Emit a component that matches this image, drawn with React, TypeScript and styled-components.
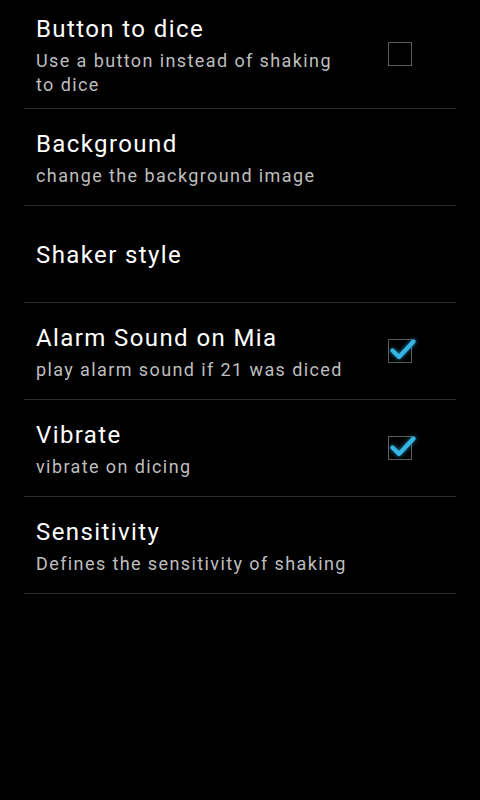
import React from 'react';
import styled, { createGlobalStyle } from 'styled-components';

const GlobalStyle = createGlobalStyle`
  html, body {
    margin: 0;
    padding: 0;
    background: #000;
  }
  body {
    font-family: Roboto, "Noto Sans", sans-serif;
    -webkit-font-smoothing: antialiased;
  }
`;

const Screen = styled.div`
  width: 480px;
  height: 800px;
  background: #000;
  overflow: hidden;
`;

const List = styled.ul`
  list-style: none;
  margin: 0;
  padding: 0 24px;
`;

const Row = styled.li<{ $tall?: boolean }>`
  display: flex;
  align-items: center;
  height: ${props => (props.$tall ? 108 : 96)}px;
  border-bottom: 1px solid #2b2b2b;
  padding: 0 32px 0 12px;
`;

const TextBlock = styled.div`
  width: 312px;
  padding-top: 2px;
  display: flex;
  flex-direction: column;
`;

const Title = styled.div`
  color: #fff;
  font-size: 24px;
  line-height: 30px;
  letter-spacing: 1.4px;
`;

const Summary = styled.div`
  color: #bebebe;
  font-size: 18px;
  line-height: 24px;
  letter-spacing: 1.4px;
  margin-top: 5px;
`;

const Widget = styled.div`
  margin-left: auto;
  width: 48px;
  display: flex;
  justify-content: center;
`;

const Box = styled.div`
  position: relative;
  width: 24px;
  height: 24px;
  box-sizing: border-box;
  border: 1.5px solid #5c5c5c;

  svg {
    position: absolute;
    left: 0px;
    top: -6px;
    overflow: visible;
    filter: drop-shadow(0 0 2px rgba(51, 181, 229, 0.75));
  }
`;

const CheckBox: React.FC<{ checked?: boolean }> = ({ checked }) => (
  <Box>
    {checked && (
      <svg width="28" height="28" viewBox="0 0 28 28">
        <path
          d="M3.5 16.5 L10 23 L24.5 7.5"
          fill="none"
          stroke="#33b5e5"
          strokeWidth="4.2"
          strokeLinecap="round"
          strokeLinejoin="round"
        />
      </svg>
    )}
  </Box>
);

type Pref = {
  title: string;
  summary?: string;
  checkbox?: boolean;
  checked?: boolean;
  tall?: boolean;
};

const prefs: Pref[] = [
  {
    title: 'Button to dice',
    summary: 'Use a button instead of shaking to dice',
    checkbox: true,
    tall: true,
  },
  { title: 'Background', summary: 'change the background image' },
  { title: 'Shaker style' },
  {
    title: 'Alarm Sound on Mia',
    summary: 'play alarm sound if 21 was diced',
    checkbox: true,
    checked: true,
  },
  { title: 'Vibrate', summary: 'vibrate on dicing', checkbox: true, checked: true },
  { title: 'Sensitivity', summary: 'Defines the sensitivity of shaking' },
];

export default function App() {
  return (
    <Screen>
      <GlobalStyle />
      <List>
        {prefs.map(p => (
          <Row key={p.title} $tall={p.tall}>
            <TextBlock>
              <Title>{p.title}</Title>
              {p.summary && <Summary>{p.summary}</Summary>}
            </TextBlock>
            {p.checkbox && (
              <Widget>
                <CheckBox checked={p.checked} />
              </Widget>
            )}
          </Row>
        ))}
      </List>
    </Screen>
  );
}
